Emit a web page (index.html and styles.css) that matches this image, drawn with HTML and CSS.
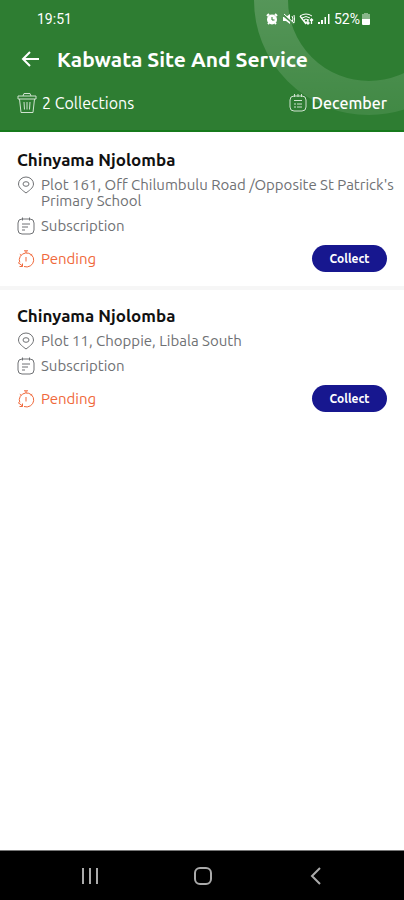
FILE: index.html
```
<!DOCTYPE html>
<html lang="en">
<head>
<meta charset="utf-8">
<meta name="viewport" content="width=device-width, initial-scale=1">
<title>Kabwata Site And Service</title>
<link rel="stylesheet" href="styles.css">
</head>
<body>
<svg class="symbols" aria-hidden="true">
  <symbol id="pin" viewBox="0 0 18 18"><path d="M9 17C6.500 15 1.500 12 1.500 8a7.500 7 0 0 1 15 0C16.500 12 11.500 15 9 17z"/><ellipse cx="9" cy="8" rx="3" ry="2.300"/></symbol>
  <symbol id="note" viewBox="0 0 18 18"><rect x="1" y="2" width="16" height="15" rx="4"/><path d="M5.500.5v3M12.500.5v3M5 7h8M5 10h6M5 13h3"/></symbol>
  <symbol id="timer" viewBox="0 0 18 18"><path d="M2.800 12.500A7.200 7 0 1 1 7 16.500M7 .8h4M9 1v2M9 7v4.500M2.800 4.200l1.500 1.300M15.200 4.200l-1.500 1.300M1 12.500l4.500 3.500M5.500 13.500V16.500H2.500"/></symbol>
</svg>
<div class="app">
  <header class="header">
    <svg class="ring" viewBox="0 0 150 118" aria-hidden="true">
      <defs><linearGradient id="fade" gradientUnits="userSpaceOnUse" x1="0" y1="0" x2="0" y2="116"><stop offset="0" stop-color="#fff" stop-opacity=".19"/><stop offset="1" stop-color="#fff" stop-opacity=".09"/></linearGradient></defs>
      <circle cx="115" cy="0" r="98" stroke="url(#fade)"/>
    </svg>
    <div class="status">
      <span>19:51</span>
      <div class="status-icons">
        <svg width="12" height="12" viewBox="0 0 12 12"><circle cx="6" cy="6.500" r="5" fill="#fff"/><path d="M1 3l2-2M11 3L9 1M2 11l1-1M10 11l-1-1" stroke="#fff" stroke-width="2"/><path d="M6 4v3h2.500" fill="none" stroke="#2e7d32"/></svg>
        <svg width="13" height="12" viewBox="0 0 13 12"><path d="M1 4h3l4-3v10L4 8H1z" fill="#fff"/><path d="M10 3q2 3 0 6M12 2q1 4 0 8" fill="none" stroke="#fff"/><path d="M1 2l11 9" stroke="#4d9150" stroke-width="2"/><path d="M2 1l10 9" stroke="#fff"/></svg>
        <svg width="15" height="12" viewBox="0 0 15 12" fill="none" stroke="#fff"><path d="M1 3q6-4 12 0M3 5q4-3 8 0M5 7q2-2 4 0l-2 3z"/><path d="M1 3l6 8M9 6v5M7.500 9.500L9 11l1.500-1.500M12.500 11V6M11 7.500L12.500 6 14 7.500" stroke-width="1.300"/></svg>
        <svg width="12" height="12" viewBox="0 0 12 12" fill="#fff"><path d="M0 9h2v2H0zM3 7h2v4H3zM6.500 4H8v7H6.500zM10 1h1.500v10H10z"/></svg>
        <div class="battery">
          <span>52%</span>
          <svg width="10" height="12" viewBox="0 0 10 12"><path d="M3 0h4v1h2v5H1V1h2z" fill="#88b68a"/><path d="M1 6h8v5a1 1 0 0 1-1 1H2a1 1 0 0 1-1-1z" fill="#fff"/></svg>
        </div>
      </div>
    </div>
    <div class="titlebar">
      <button class="back" type="button" aria-label="Back"><svg width="20" height="18" viewBox="0 0 20 18"><path d="M18 9H2M9 2L2 9l7 7"/></svg></button>
      <h1>Kabwata Site And Service</h1>
    </div>
    <div class="summary">
      <div class="summary-item">
        <svg width="20" height="22" viewBox="0 0 20 22"><path d="M1 4h18v3H1zM6 4l1-2.500h6L14 4M2.500 7L4 20.500h12L17.500 7M7 10l.5 7.500M10 10v7.500M13 10l-.5 7.500"/></svg>
        <span>2 Collections</span>
      </div>
      <div class="summary-item">
        <svg width="18" height="18" viewBox="0 0 18 18"><rect x="1" y="2" width="16" height="15" rx="4"/><path d="M5.500 0v3M9 0v3M12.500 0v3M5 6.500h8M5 10h2M8 10h5M5 13h2M8 13h5"/></svg>
        <span class="month">December</span>
      </div>
    </div>
  </header>
  <main class="list">
    <article class="card">
      <h2>Chinyama Njolomba</h2>
      <p class="line"><svg class="icon"><use href="#pin"/></svg><span>Plot 161, Off Chilumbulu Road /Opposite St Patrick's Primary School</span></p>
      <p class="line"><svg class="icon"><use href="#note"/></svg><span>Subscription</span></p>
      <div class="actions">
        <p class="line pending"><svg class="icon"><use href="#timer"/></svg><span>Pending</span></p>
        <button class="collect" type="button">Collect</button>
      </div>
    </article>
    <article class="card">
      <h2>Chinyama Njolomba</h2>
      <p class="line"><svg class="icon"><use href="#pin"/></svg><span>Plot 11, Choppie, Libala South</span></p>
      <p class="line"><svg class="icon"><use href="#note"/></svg><span>Subscription</span></p>
      <div class="actions">
        <p class="line pending"><svg class="icon"><use href="#timer"/></svg><span>Pending</span></p>
        <button class="collect" type="button">Collect</button>
      </div>
    </article>
  </main>
  <nav class="navbar" aria-label="System">
    <button type="button" aria-label="Recent apps"><svg width="20" height="20" viewBox="0 0 20 20"><path d="M3 2v16M10 2v16M17 2v16"/></svg></button>
    <button type="button" aria-label="Home"><svg width="20" height="20" viewBox="0 0 20 20"><rect x="2" y="2" width="16" height="16" rx="5"/></svg></button>
    <button type="button" aria-label="Back"><svg width="20" height="20" viewBox="0 0 20 20"><path d="M14 2l-8 8 8 8"/></svg></button>
  </nav>
</div>
</body>
</html>
```
FILE: styles.css
```
* { box-sizing: border-box; }
body {
  margin: 0;
  background: #fff;
  font-family: Ubuntu, "Noto Sans", sans-serif;
}
h1, h2, p { margin: 0; }
button {
  padding: 0;
  border: 0;
  background: none;
  font-family: inherit;
}
svg { flex: none; display: block; }
.symbols { position: absolute; width: 0; height: 0; }
.app {
  display: flex;
  flex-direction: column;
  min-height: 100vh;
}
.header {
  position: relative;
  overflow: hidden;
  padding: 8px 17px 15px;
  border-bottom: 2px solid #167a1c;
  background: #2e7d32;
  color: #fff;
}
.ring {
  position: absolute;
  top: 0;
  right: 0;
  width: 150px;
  height: 118px;
}
.ring circle {
  fill: none;
  stroke-width: 34px;
}
.status, .titlebar, .summary { position: relative; }
.status {
  display: flex;
  justify-content: space-between;
  align-items: center;
  height: 22px;
  padding: 0 16px 0 20px;
  font-family: Roboto, sans-serif;
  font-size: 14px;
}
.status-icons {
  display: flex;
  align-items: center;
  gap: 4px;
}
.battery {
  display: flex;
  align-items: center;
  gap: 1px;
}
.titlebar {
  display: flex;
  align-items: center;
  gap: 16px;
  height: 58px;
  padding-left: 4px;
}
.back svg {
  fill: none;
  stroke: #fff;
  stroke-width: 2px;
}
h1 {
  font-size: 21px;
  line-height: 28px;
  font-weight: 700;
}
.summary {
  display: flex;
  justify-content: space-between;
  align-items: center;
  height: 24px;
  margin-top: 3px;
  font-size: 16px;
}
.summary-item {
  display: flex;
  align-items: center;
  gap: 5px;
}
.summary-item svg {
  fill: none;
  stroke: #cfe3d0;
}
.month { font-weight: 500; }
.list {
  flex: 1;
  padding-top: 2px;
}
.card {
  padding: 16px 17px 14px;
  border-bottom: 4px solid #f6f6f6;
}
.card:last-child { border-bottom: 0; }
h2 {
  margin-bottom: 6px;
  font-size: 17px;
  line-height: 20px;
  font-weight: 700;
  color: #111;
}
.line {
  display: flex;
  align-items: flex-start;
  gap: 6px;
  margin: 0 -12px 7px 0;
  color: #6f7174;
  font-size: 15px;
  line-height: 16px;
}
.line span { padding: 1px 0; }
.icon {
  width: 18px;
  height: 18px;
  fill: none;
  stroke: currentColor;
}
.actions {
  display: flex;
  justify-content: space-between;
  align-items: center;
  margin-top: 10px;
}
.actions .line { margin: 0; }
.line.pending { color: #f0683a; }
.collect {
  width: 75px;
  height: 27px;
  border-radius: 14px;
  background: #17178f;
  color: #fff;
  font-size: 12px;
  font-weight: 700;
}
.navbar {
  display: flex;
  justify-content: space-between;
  align-items: center;
  height: 50px;
  padding: 0 78px 0 80px;
  border-top: 1px solid #777;
  background: #000;
}
.navbar svg {
  fill: none;
  stroke: #aaa;
  stroke-width: 2px;
}
```
